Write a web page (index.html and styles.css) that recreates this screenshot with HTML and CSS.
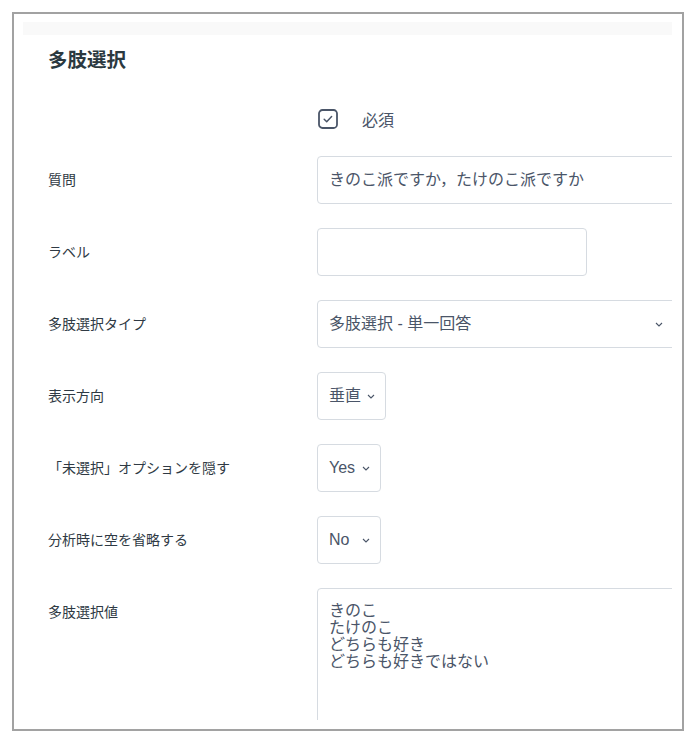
FILE: index.html
```html
<!DOCTYPE html>
<html lang="ja">
<head>
<meta charset="utf-8">
<title>多肢選択</title>
<link rel="stylesheet" href="styles.css">
</head>
<body>
<div class="frame">
  <div class="panel">
    <div class="band"></div>
    <div class="content">
      <h2 class="title">多肢選択</h2>
      <div class="grid">
        <div class="label-cell"></div>
        <div class="required">
          <svg class="checkbox" width="20" height="20" viewBox="0 0 20 20">
            <rect x="1" y="1" width="18" height="18" rx="3.5" fill="#fff" stroke="#4a5568" stroke-width="1.8"/>
            <path d="M6.2 10.3 L8.7 12.7 L13.6 7.6" fill="none" stroke="#4a5568" stroke-width="1.5" stroke-linecap="round" stroke-linejoin="round"/>
          </svg>
          <span class="req-text">必須</span>
        </div>
      </div>
      <div class="grid form">
        <div class="label">質問</div>
        <div class="control wide">きのこ派ですか，たけのこ派ですか</div>

        <div class="label">ラベル</div>
        <div class="control short"></div>

        <div class="label">多肢選択タイプ</div>
        <div class="control wide select">
          <span>多肢選択 - 単一回答</span>
          <svg class="chev" width="8" height="5" viewBox="0 0 8 5"><path d="M1 1 L4 4 L7 1" fill="none" stroke="#4a5568" stroke-width="1.1"/></svg>
        </div>

        <div class="label">表示方向</div>
        <div class="control select inline">
          <span class="opt-dir">垂直</span>
          <svg class="chev" width="8" height="5" viewBox="0 0 8 5"><path d="M1 1 L4 4 L7 1" fill="none" stroke="#4a5568" stroke-width="1.1"/></svg>
        </div>

        <div class="label">「未選択」オプションを隠す</div>
        <div class="control select inline">
          <span class="opt-yn">Yes</span>
          <svg class="chev" width="8" height="5" viewBox="0 0 8 5"><path d="M1 1 L4 4 L7 1" fill="none" stroke="#4a5568" stroke-width="1.1"/></svg>
        </div>

        <div class="label">分析時に空を省略する</div>
        <div class="control select inline">
          <span class="opt-yn">No</span>
          <svg class="chev" width="8" height="5" viewBox="0 0 8 5"><path d="M1 1 L4 4 L7 1" fill="none" stroke="#4a5568" stroke-width="1.1"/></svg>
        </div>

        <div class="label">多肢選択値</div>
        <div class="control wide textarea">きのこ<br>たけのこ<br>どちらも好き<br>どちらも好きではない</div>
      </div>
    </div>
  </div>
</div>
</body>
</html>
```
FILE: styles.css
```css
html, body {
  margin: 0;
  padding: 0;
  background: #ffffff;
}
body {
  font-family: "Liberation Sans", "Noto Sans CJK JP", sans-serif;
  color: #2f3a44;
}
.frame {
  box-sizing: border-box;
  margin: 12px 0 0 12px;
  width: 672px;
  height: 719px;
  border: 2px solid #a2a2a2;
  padding: 8px 9px 9px 9px;
  background: #fff;
}
.panel {
  height: 698px;
  width: 649px;
  overflow: hidden;
  background: #fff;
}
.band {
  height: 13px;
  background: #f9f9f9;
}
.content {
  padding-left: 25px;
}
.title {
  margin: 11px 0 0 0;
  font-size: 19.5px;
  line-height: 28px;
  font-weight: 700;
  color: #2b3940;
}
.grid {
  display: grid;
  grid-template-columns: 269px auto;
  justify-content: start;
}
.required {
  margin-top: 33px;
  height: 24px;
  display: flex;
  align-items: center;
  gap: 24px;
  padding-left: 1px;
}
.checkbox {
  display: block;
}
.req-text {
  font-size: 16px;
  color: #4a5568;
}
.form {
  margin-top: 25px;
  row-gap: 24px;
}
.label {
  font-size: 14px;
  height: 48px;
  line-height: 48px;
  color: #2f3a44;
  white-space: nowrap;
}
.control {
  box-sizing: border-box;
  height: 48px;
  border: 1px solid #d6dbe1;
  border-radius: 4px;
  padding: 0 11px;
  font-size: 16px;
  line-height: 46px;
  color: #4a5568;
  white-space: nowrap;
  background: #fff;
}
.wide {
  width: 360px;
}
.short {
  width: 270px;
}
.select {
  display: flex;
  align-items: center;
  justify-content: space-between;
}
.wide.select {
  padding-right: 13px;
}
.inline {
  justify-self: start;
  gap: 6px;
  padding-right: 10px;
}
.opt-dir {
  width: 32px;
}
.opt-yn {
  width: 27px;
}
.chev {
  display: block;
  flex: none;
}
.textarea {
  height: 150px;
  line-height: 17px;
  padding-top: 13px;
  white-space: normal;
}
```
